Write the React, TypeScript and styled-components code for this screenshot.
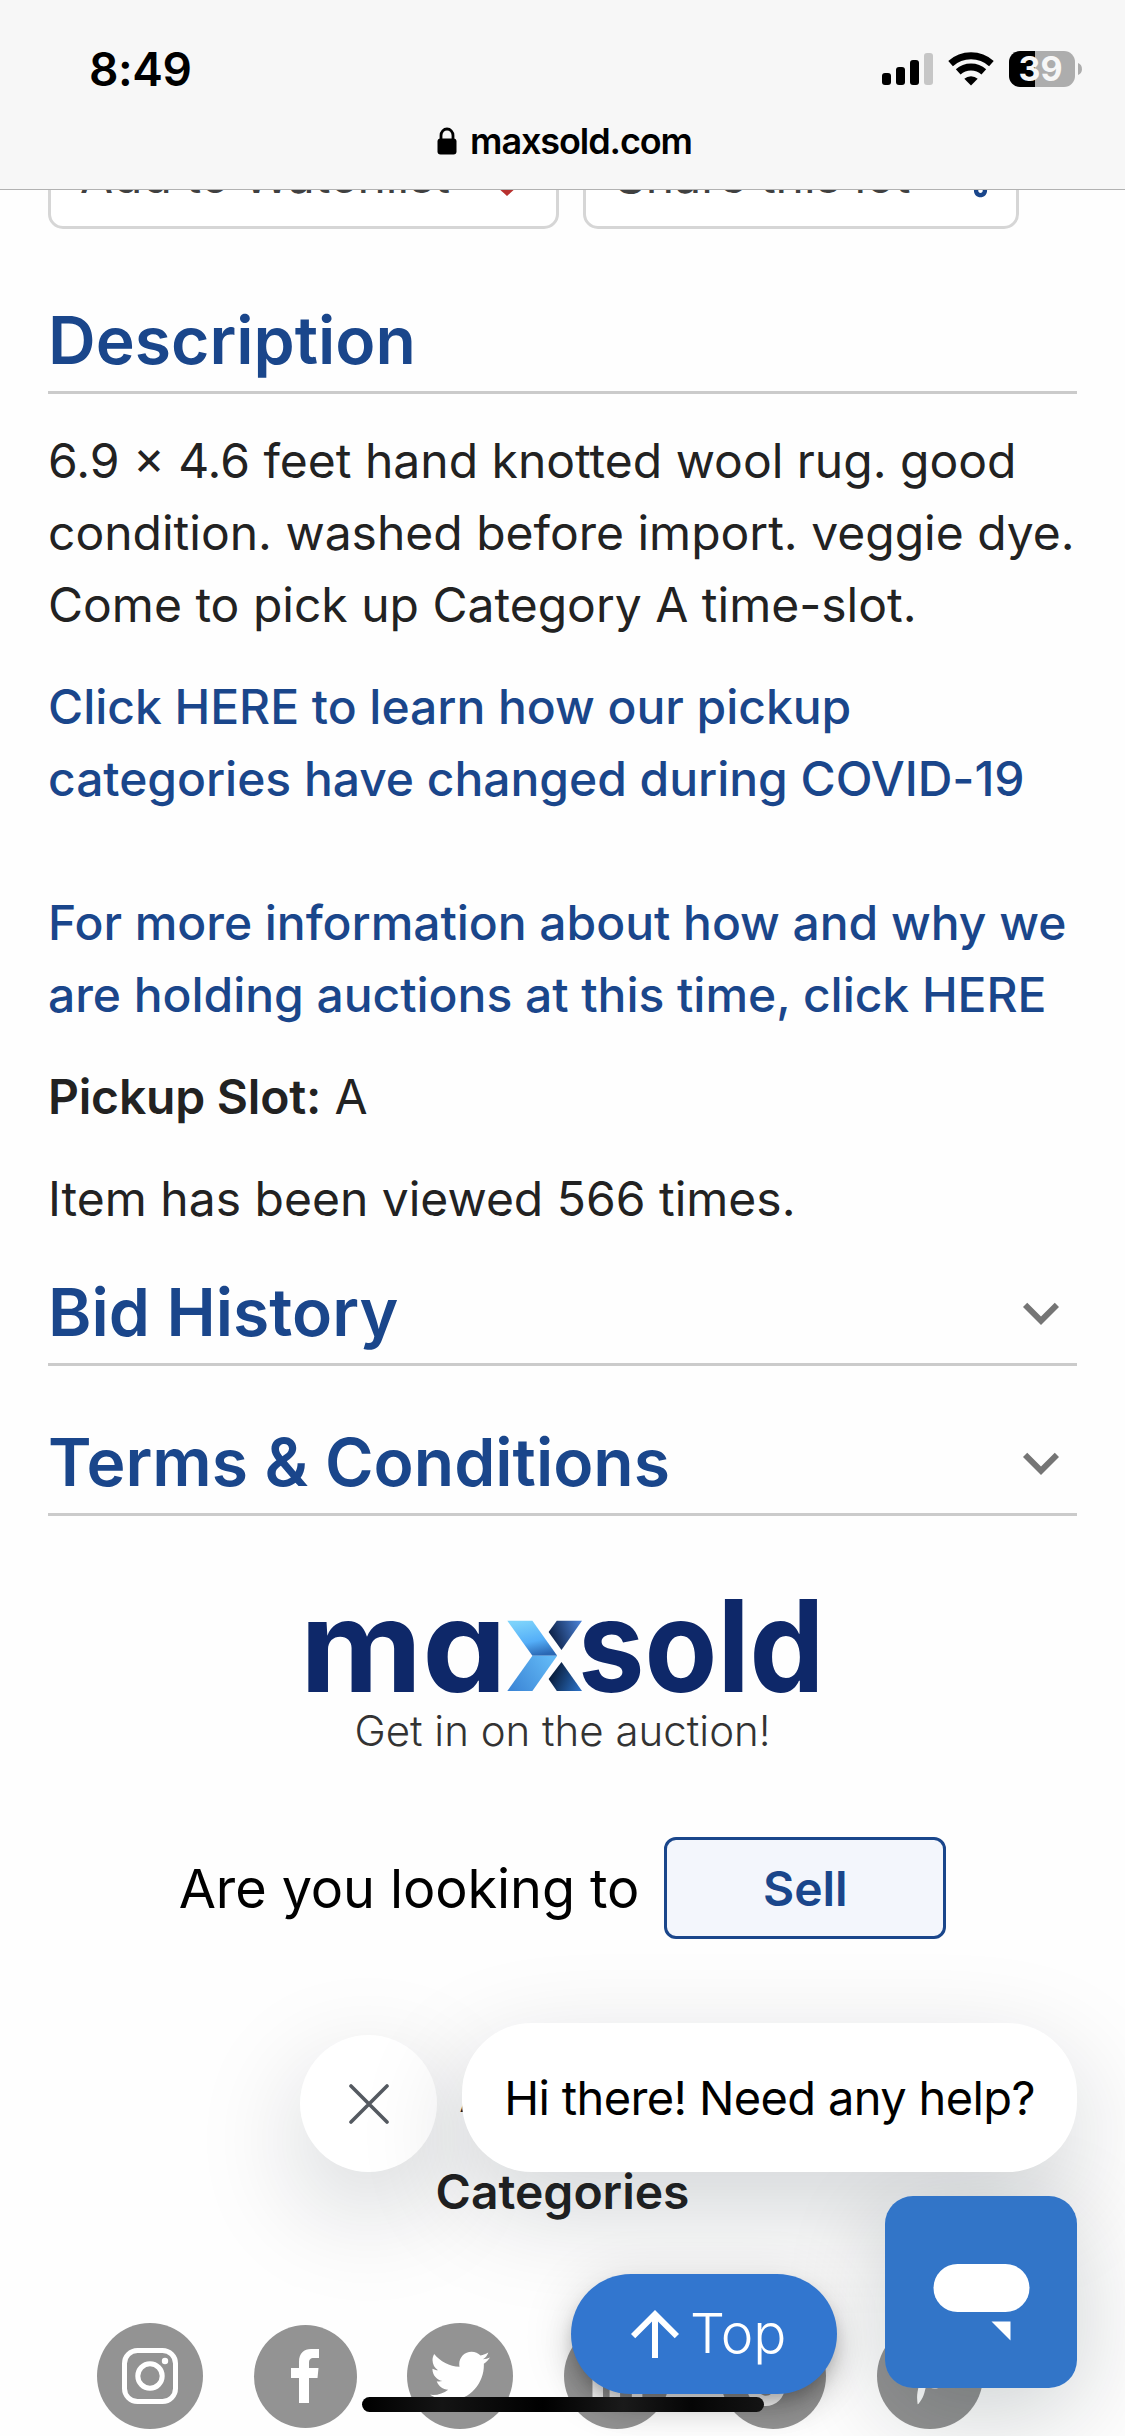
import React from "react";
import styled, { createGlobalStyle } from "styled-components";
import { FaTwitter, FaLinkedinIn, FaTiktok, FaPinterestP } from "react-icons/fa";
import { MdFavoriteBorder, MdOutlineShare } from "react-icons/md";

const BLUE = "#1a468b";
const TEXT = "#222222";

const GlobalStyle = createGlobalStyle`
  *, *::before, *::after { box-sizing: border-box; }
  body { margin: 0; background: #fff; }
`;

const Screen = styled.div`
  position: relative;
  width: 1125px;
  height: 2436px;
  overflow: hidden;
  background: #fefefe;
  color: ${TEXT};
  font-family: Inter, "Liberation Sans", sans-serif;
`;

const BrowserBar = styled.header`
  height: 190px;
  background: #f7f7f7;
  border-bottom: 1px solid #b2b2b2;
  color: #000;
`;

const StatusRow = styled.div`
  display: flex;
  align-items: center;
  justify-content: space-between;
  height: 106px;
  padding: 32px 43px 0 89px;
`;

const Clock = styled.span`
  font-size: 46px;
  font-weight: 600;
  line-height: 74px;
  letter-spacing: -0.4px;
`;

const StatusIcons = styled.svg`
  display: block;
  width: 200px;
  height: 36px;
`;

const AddressRow = styled.div`
  display: flex;
  align-items: center;
  justify-content: center;
  gap: 13px;
  height: 70px;
  padding-left: 4px;
`;

const Address = styled.span`
  font-size: 36px;
  font-weight: 600;
  line-height: 44px;
  letter-spacing: -1.1px;
`;

const LockIcon = styled.svg`
  display: block;
  width: 20px;
  height: 28px;
`;

const Actions = styled.div`
  display: flex;
  align-items: flex-end;
  gap: 24px;
  height: 39px;
  padding: 0 48px;
  overflow: hidden;
`;

const ActionButton = styled.button<{ $width: number; $tint: string }>`
  display: flex;
  flex: none;
  align-items: center;
  justify-content: space-between;
  width: ${(p) => p.$width}px;
  height: 108px;
  padding: 0 22px 0 29px;
  border: 3px solid #d6d6d6;
  border-radius: 15px;
  background: #fff;
  color: #404040;
  font-family: inherit;
  font-size: 48px;
  white-space: nowrap;

  svg {
    flex: none;
    color: ${(p) => p.$tint};
  }
`;

const Content = styled.main`
  padding: 0 48px;
`;

const Heading = styled.h2<{ $gap: number }>`
  display: flex;
  align-items: center;
  justify-content: space-between;
  height: 105px;
  margin: ${(p) => p.$gap}px 0 0;
  border-bottom: 3px solid #cbcbcb;
  color: ${BLUE};
  font-size: 66px;
  font-weight: 600;
  line-height: 102px;
`;

const Chevron = styled.svg`
  width: 72px;
  height: 72px;
  margin-top: 2px;
  fill: #757575;
`;

const Paragraph = styled.p<{ $gap?: number }>`
  margin: ${(p) => p.$gap ?? 30}px 0 0;
  font-size: 48px;
  line-height: 72px;
  white-space: nowrap;
`;

const Strong = styled.strong`
  font-weight: 600;
  letter-spacing: -0.2px;
`;

const InfoLink = styled.a`
  color: ${BLUE};
  font-weight: 500;
  letter-spacing: -0.04px;
  text-decoration: none;
`;

const Brand = styled.div`
  display: flex;
  flex-direction: column;
  align-items: center;
  margin-top: 76px;
`;

const Wordmark = styled.svg`
  display: block;
  width: 520px;
  height: 104px;
`;

const Tagline = styled.div`
  margin-top: 5px;
  color: #333;
  font-size: 42px;
  font-weight: 300;
  line-height: 60px;
`;

const SellRow = styled.div`
  display: flex;
  align-items: center;
  justify-content: center;
  gap: 25px;
  margin-top: 76px;
  color: #000;
  font-size: 54px;
  letter-spacing: -0.1px;
`;

const SellButton = styled.button`
  width: 282px;
  height: 102px;
  padding: 0;
  border: 3px solid ${BLUE};
  border-radius: 12px;
  background: #f3f6fc;
  color: ${BLUE};
  font-family: inherit;
  font-size: 48px;
  font-weight: 600;
`;

const FooterNav = styled.nav`
  display: flex;
  flex-direction: column;
  align-items: center;
  margin-top: 107px;
`;

const FooterLink = styled.a`
  color: ${TEXT};
  font-size: 48px;
  font-weight: 600;
  line-height: 97px;
`;

const SocialRow = styled.div`
  display: flex;
  align-items: center;
  gap: 50.5px;
  margin-top: 83px;
  padding-left: 97px;
`;

const SocialBadge = styled.a<{ $size?: number }>`
  display: flex;
  flex: none;
  align-items: center;
  justify-content: center;
  width: ${(p) => p.$size ?? 106}px;
  height: ${(p) => p.$size ?? 106}px;
  border-radius: 50%;
  background: #939393;
  color: #fff;
`;

const BadgeIcon = styled.svg`
  width: 60px;
  height: 60px;
`;

const FLOAT_SHADOW = "0 36px 108px rgba(0, 24, 32, 0.18)";

const DismissButton = styled.button`
  position: absolute;
  left: 300px;
  top: 2035px;
  display: flex;
  align-items: center;
  justify-content: center;
  width: 137px;
  height: 137px;
  padding: 0;
  border: 0;
  border-radius: 50%;
  background: #fff;
  box-shadow: ${FLOAT_SHADOW};
`;

const Greeting = styled.div`
  position: absolute;
  left: 462px;
  top: 2023px;
  width: 615px;
  height: 149px;
  border-radius: 70px;
  background: #fff;
  box-shadow: ${FLOAT_SHADOW};
  color: #000;
  font-size: 47px;
  line-height: 149px;
  letter-spacing: -0.63px;
  text-align: center;
  white-space: nowrap;
`;

const ChatHalo = styled.div`
  position: absolute;
  left: 885px;
  top: 2196px;
  width: 192px;
  height: 192px;
  border-radius: 28px;
  box-shadow: 0 24px 100px rgba(0, 24, 32, 0.2);
`;

const ChatButton = styled.button`
  position: absolute;
  left: 885px;
  top: 2196px;
  width: 192px;
  height: 192px;
  padding: 0;
  border: 0;
  border-radius: 28px;
  background: #3275c8;
`;

const TopButton = styled.button`
  position: absolute;
  left: 571px;
  top: 2274px;
  display: flex;
  align-items: center;
  width: 266px;
  height: 120px;
  padding: 0 0 0 48px;
  border: 0;
  border-radius: 60px;
  background: #3276cf;
  box-shadow: 0 9px 15px -3px rgba(0, 0, 0, 0.2), 0 18px 30px rgba(0, 0, 0, 0.14),
    0 3px 54px rgba(0, 0, 0, 0.12);
  color: #fff;
  font-family: inherit;
  font-size: 55px;
  font-weight: 350;
  letter-spacing: 0;
`;

const TopLabel = styled.span`
  padding-bottom: 2px;
`;

const ArrowIcon = styled.svg`
  flex: none;
  width: 72px;
  height: 72px;
  margin-right: -1px;
  fill: currentColor;
`;

const HomeIndicator = styled.div`
  position: absolute;
  left: 362px;
  top: 2397px;
  width: 402px;
  height: 15px;
  border-radius: 8px;
  background: linear-gradient(90deg, #000, #141414 20%, #000 45%, #1a1a1a 65%, #050505 82%, #141414);
`;

function Status() {
  return (
    <StatusIcons viewBox="0 0 200 36">
      <rect x="0" y="22" width="9" height="12" rx="3" />
      <rect x="14" y="16" width="9" height="18" rx="3" />
      <rect x="28" y="9" width="9" height="25" rx="3" />
      <rect x="42" y="2" width="9" height="32" rx="3" fill="#c6c6c6" />
      <g fill="none" stroke="#000" strokeWidth="7">
        <path d="M68.6 12.6a30.5 30.5 0 0 1 40.8 0" />
        <path d="M76.2 20.9a19 19 0 0 1 25.6 0" />
      </g>
      <path d="M89 34.5l-6.7-6.7a9.8 9.8 0 0 1 13.4 0z" />
      <path d="M153 0h-15a11 11 0 0 0-11 11v14a11 11 0 0 0 11 11h15z" />
      <path d="M153 0h29a11 11 0 0 1 11 11v14a11 11 0 0 1-11 11h-29z" fill="#adadad" />
      <path d="M196 12c5.3 1.700 5.3 10.300 0 12z" fill="#adadad" />
      <text x="158.500" y="30" textAnchor="middle" fontSize="34" fontWeight="700" fill="#f7f7f7">
        39
      </text>
    </StatusIcons>
  );
}

function ExpandIcon() {
  return (
    <Chevron viewBox="0 0 24 24">
      <path d="M16.59 8.59L12 13.17 7.41 8.59 6 10l6 6 6-6z" />
    </Chevron>
  );
}

const WordmarkText = styled.text`
  fill: #0e2869;
  font-size: 128px;
  font-weight: 700;
  font-feature-settings: "cv11";
`;

function Logo() {
  return (
    <Wordmark viewBox="303 1592 520 104">
      <defs>
        <linearGradient id="upperLeft" x1="0.3" y1="0" x2="0.6" y2="1">
          <stop offset="0" stopColor="#7dd3fb" />
          <stop offset="0.6" stopColor="#54aef8" />
          <stop offset="1" stopColor="#2a68b4" />
        </linearGradient>
        <linearGradient id="lowerLeft" x1="0" y1="0.8" x2="1" y2="0.3">
          <stop offset="0" stopColor="#3c86d6" />
          <stop offset="1" stopColor="#62b9f6" />
        </linearGradient>
        <linearGradient id="upperRight" x1="0" y1="0.5" x2="1" y2="0.2">
          <stop offset="0" stopColor="#0a1d42" />
          <stop offset="1" stopColor="#4a80d4" />
        </linearGradient>
        <linearGradient id="lowerRight" x1="0" y1="0.4" x2="1" y2="0.8">
          <stop offset="0" stopColor="#06162f" />
          <stop offset="1" stopColor="#2a6fc4" />
        </linearGradient>
      </defs>
      <WordmarkText x="300" y="1691.500" textLength="206.500" lengthAdjust="spacingAndGlyphs">
        ma
      </WordmarkText>
      <WordmarkText x="578" y="1691.500" textLength="246.500" lengthAdjust="spacingAndGlyphs">
        sold
      </WordmarkText>
      <path d="M507.300 1620.700h25.100l24.800 35h-24.800z" fill="url(#upperLeft)" />
      <path d="M532.400 1655.700h24.800l-24.800 35.300h-25.100z" fill="url(#lowerLeft)" />
      <path d="M556.800 1620.700H582l-20.500 29.300-12.900-18z" fill="url(#upperRight)" />
      <path d="M561.500 1662L582 1691h-25.200l-8.200-12z" fill="url(#lowerRight)" />
    </Wordmark>
  );
}

export default function App() {
  return (
    <Screen>
      <GlobalStyle />
      <BrowserBar>
        <StatusRow>
          <Clock>8:49</Clock>
          <Status />
        </StatusRow>
        <AddressRow>
          <LockIcon viewBox="0 0 20 28">
            <rect x="0.500" y="11.500" width="19" height="16" rx="3" />
            <path d="M4 12V8.500a6 6.500 0 0 1 12 0V12" fill="none" stroke="#000" strokeWidth="2.800" />
          </LockIcon>
          <Address>maxsold.com</Address>
        </AddressRow>
      </BrowserBar>

      <Actions>
        <ActionButton $width={511} $tint="#b8312f">
          Add to Watchlist
          <MdFavoriteBorder size={54} />
        </ActionButton>
        <ActionButton $width={436} $tint={BLUE}>
          Share this lot
          <MdOutlineShare size={54} />
        </ActionButton>
      </Actions>

      <Content>
        <Heading $gap={60}>Description</Heading>
        <Paragraph $gap={31}>
          6.9 × 4.6 feet hand knotted wool rug. good
          <br />
          condition. washed before import. veggie dye.
          <br />
          Come to pick up Category A time-slot.
        </Paragraph>
        <Paragraph>
          <InfoLink>
            Click HERE to learn how our pickup
            <br />
            categories have changed during COVID-19
          </InfoLink>
          <br />
          <br />
          <InfoLink>
            For more information about how and why we
            <br />
            are holding auctions at this time, click HERE
          </InfoLink>
        </Paragraph>
        <Paragraph>
          <Strong>Pickup Slot:</Strong> A
        </Paragraph>
        <Paragraph>Item has been viewed 566 times.</Paragraph>
        <Heading $gap={26}>
          Bid History
          <ExpandIcon />
        </Heading>
        <Heading $gap={45}>
          Terms &amp; Conditions
          <ExpandIcon />
        </Heading>
      </Content>

      <Brand>
        <Logo />
        <Tagline>Get in on the auction!</Tagline>
      </Brand>
      <SellRow>
        Are you looking to
        <SellButton>Sell</SellButton>
      </SellRow>
      <FooterNav>
        <FooterLink>Auctions</FooterLink>
        <FooterLink>Categories</FooterLink>
      </FooterNav>
      <SocialRow>
        <SocialBadge>
          <BadgeIcon viewBox="0 0 60 60" fill="none" stroke="#fff" strokeWidth="5">
            <rect x="4.500" y="4.500" width="51" height="51" rx="13" />
            <circle cx="30" cy="30" r="12.200" />
            <circle cx="45" cy="15" r="3.200" fill="#fff" stroke="none" />
          </BadgeIcon>
        </SocialBadge>
        <SocialBadge $size={103}>
          <BadgeIcon viewBox="0 0 60 60" fill="#fff">
            <path d="M24 57V32h-8V22h8v-6C24 7 29 3 36 3h8v9h-5c-4 0-5 2-5 5v5h9.500l-1 10H34v25z" />
          </BadgeIcon>
        </SocialBadge>
        <SocialBadge>
          <FaTwitter size={60} />
        </SocialBadge>
        <SocialBadge>
          <FaLinkedinIn size={58} />
        </SocialBadge>
        <SocialBadge>
          <FaTiktok size={60} />
        </SocialBadge>
        <SocialBadge>
          <FaPinterestP size={58} />
        </SocialBadge>
      </SocialRow>

      <ChatHalo />
      <DismissButton aria-label="Dismiss">
        <svg width="40" height="40" viewBox="0 0 40 40" stroke="#555a61" strokeWidth="3.600" strokeLinecap="round">
          <path d="M2 2l36 36M38 2L2 38" />
        </svg>
      </DismissButton>
      <Greeting>Hi there! Need any help?</Greeting>
      <ChatButton aria-label="Chat">
        <svg width="192" height="192" viewBox="0 0 192 192" fill="#fff">
          <rect x="48.500" y="68" width="96" height="48" rx="24" />
          <path d="M106.500 125.500h19v19z" />
        </svg>
      </ChatButton>
      <TopButton>
        <ArrowIcon viewBox="0 0 24 24">
          <path d="M4 12l1.410 1.410L11 7.830V20h2V7.830l5.580 5.590L20 12l-8-8-8 8z" />
        </ArrowIcon>
        <TopLabel>Top</TopLabel>
      </TopButton>
      <HomeIndicator />
    </Screen>
  );
}
